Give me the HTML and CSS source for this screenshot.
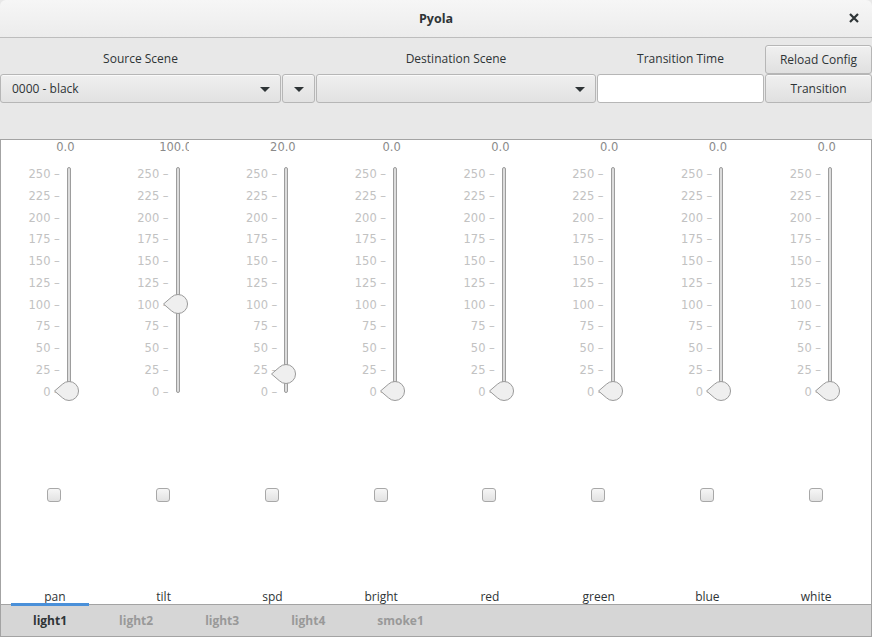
FILE: index.html
```html
<!DOCTYPE html>
<html>
<head>
<meta charset="utf-8">
<link rel="stylesheet" href="styles.css">
</head>
<body>
<div class="win">
  <div class="titlebar">
    <span class="title">Pyola</span>
    <svg class="close" width="10" height="10" viewBox="0 0 10 10"><path d="M1 1 L9 9 M9 1 L1 9"/></svg>
  </div>
  <div class="toolbar">
    <div class="grid">
      <div class="lbl c1">Source Scene</div>
      <div class="lbl c3">Destination Scene</div>
      <div class="lbl c4">Transition Time</div>
      <div class="btn c5">Reload Config</div>
      <div class="combo c1"><span>0000 - black</span><i class="arrow"></i></div>
      <div class="combo mini c2"><i class="arrow"></i></div>
      <div class="combo c3"><span></span><i class="arrow"></i></div>
      <div class="entry c4"></div>
      <div class="btn c5">Transition</div>
    </div>
  </div>
  <div class="content">
    <div class="ch">
      <div class="val">0.0</div>
      <div class="scale"><div class="ticks"><span>250 –</span><span>225 –</span><span>200 –</span><span>175 –</span><span>150 –</span><span>125 –</span><span>100 –</span><span>75 –</span><span>50 –</span><span>25 –</span><span>0 –</span></div><div class="trough"><svg class="knob" style="top:212px" width="28" height="22" viewBox="0 0 28 22"><path d="M1.5 11 L9.3 4.3 A9.5 9.5 0 1 1 9.3 17.7 Z"/></svg></div></div>
      <div class="chk"></div>
      <div class="name">pan</div>
    </div>
    <div class="ch">
      <div class="val">100.0</div>
      <div class="scale"><div class="ticks"><span>250 –</span><span>225 –</span><span>200 –</span><span>175 –</span><span>150 –</span><span>125 –</span><span>100 –</span><span>75 –</span><span>50 –</span><span>25 –</span><span>0 –</span></div><div class="trough"><svg class="knob" style="top:125px" width="28" height="22" viewBox="0 0 28 22"><path d="M1.5 11 L9.3 4.3 A9.5 9.5 0 1 1 9.3 17.7 Z"/></svg></div></div>
      <div class="chk"></div>
      <div class="name">tilt</div>
    </div>
    <div class="ch">
      <div class="val">20.0</div>
      <div class="scale"><div class="ticks"><span>250 –</span><span>225 –</span><span>200 –</span><span>175 –</span><span>150 –</span><span>125 –</span><span>100 –</span><span>75 –</span><span>50 –</span><span>25 –</span><span>0 –</span></div><div class="trough"><svg class="knob" style="top:195px" width="28" height="22" viewBox="0 0 28 22"><path d="M1.5 11 L9.3 4.3 A9.5 9.5 0 1 1 9.3 17.7 Z"/></svg></div></div>
      <div class="chk"></div>
      <div class="name">spd</div>
    </div>
    <div class="ch">
      <div class="val">0.0</div>
      <div class="scale"><div class="ticks"><span>250 –</span><span>225 –</span><span>200 –</span><span>175 –</span><span>150 –</span><span>125 –</span><span>100 –</span><span>75 –</span><span>50 –</span><span>25 –</span><span>0 –</span></div><div class="trough"><svg class="knob" style="top:212px" width="28" height="22" viewBox="0 0 28 22"><path d="M1.5 11 L9.3 4.3 A9.5 9.5 0 1 1 9.3 17.7 Z"/></svg></div></div>
      <div class="chk"></div>
      <div class="name">bright</div>
    </div>
    <div class="ch">
      <div class="val">0.0</div>
      <div class="scale"><div class="ticks"><span>250 –</span><span>225 –</span><span>200 –</span><span>175 –</span><span>150 –</span><span>125 –</span><span>100 –</span><span>75 –</span><span>50 –</span><span>25 –</span><span>0 –</span></div><div class="trough"><svg class="knob" style="top:212px" width="28" height="22" viewBox="0 0 28 22"><path d="M1.5 11 L9.3 4.3 A9.5 9.5 0 1 1 9.3 17.7 Z"/></svg></div></div>
      <div class="chk"></div>
      <div class="name">red</div>
    </div>
    <div class="ch">
      <div class="val">0.0</div>
      <div class="scale"><div class="ticks"><span>250 –</span><span>225 –</span><span>200 –</span><span>175 –</span><span>150 –</span><span>125 –</span><span>100 –</span><span>75 –</span><span>50 –</span><span>25 –</span><span>0 –</span></div><div class="trough"><svg class="knob" style="top:212px" width="28" height="22" viewBox="0 0 28 22"><path d="M1.5 11 L9.3 4.3 A9.5 9.5 0 1 1 9.3 17.7 Z"/></svg></div></div>
      <div class="chk"></div>
      <div class="name">green</div>
    </div>
    <div class="ch">
      <div class="val">0.0</div>
      <div class="scale"><div class="ticks"><span>250 –</span><span>225 –</span><span>200 –</span><span>175 –</span><span>150 –</span><span>125 –</span><span>100 –</span><span>75 –</span><span>50 –</span><span>25 –</span><span>0 –</span></div><div class="trough"><svg class="knob" style="top:212px" width="28" height="22" viewBox="0 0 28 22"><path d="M1.5 11 L9.3 4.3 A9.5 9.5 0 1 1 9.3 17.7 Z"/></svg></div></div>
      <div class="chk"></div>
      <div class="name">blue</div>
    </div>
    <div class="ch">
      <div class="val">0.0</div>
      <div class="scale"><div class="ticks"><span>250 –</span><span>225 –</span><span>200 –</span><span>175 –</span><span>150 –</span><span>125 –</span><span>100 –</span><span>75 –</span><span>50 –</span><span>25 –</span><span>0 –</span></div><div class="trough"><svg class="knob" style="top:212px" width="28" height="22" viewBox="0 0 28 22"><path d="M1.5 11 L9.3 4.3 A9.5 9.5 0 1 1 9.3 17.7 Z"/></svg></div></div>
      <div class="chk"></div>
      <div class="name">white</div>
    </div>
  </div>
  <div class="tabs">
    <div class="tab active">light1</div>
    <div class="tab">light2</div>
    <div class="tab">light3</div>
    <div class="tab">light4</div>
    <div class="tab">smoke1</div>
  </div>
</div>
</body>
</html>
```
FILE: styles.css
```css
* { box-sizing: border-box; }
html, body { margin: 0; padding: 0; }
body {
  width: 872px;
  height: 637px;
  overflow: hidden;
  font-family: "Open Sans", "DejaVu Sans", sans-serif;
  font-size: 12px;
  color: #2e3436;
  background: #e8e8e8;
}
.win {
  display: flex;
  flex-direction: column;
  height: 637px;
}
.titlebar {
  height: 38px;
  flex: none;
  display: flex;
  align-items: center;
  justify-content: center;
  position: relative;
  background: linear-gradient(#f6f6f6, #ececec);
  border-bottom: 1px solid #bdbdbd;
  border-radius: 6px 6px 0 0;
}
.title {
  font-weight: bold;
  font-size: 12.5px;
  color: #2e3436;
}
.close {
  position: absolute;
  left: 849px;
  top: 13px;
}
.close path {
  stroke: #2e3436;
  stroke-width: 2.2;
  fill: none;
}
.toolbar {
  height: 102px;
  flex: none;
  padding-top: 7px;
  background: #e8e8e8;
  border-bottom: 1px solid #a3a3a3;
}
.grid {
  display: grid;
  grid-template-columns: 281px 33px 280px 167px 107px;
  grid-template-rows: 29px 29px;
  column-gap: 1px;
}
.c1 { grid-column: 1; }
.c2 { grid-column: 2; }
.c3 { grid-column: 3; }
.c4 { grid-column: 4; }
.c5 { grid-column: 5; }
.lbl {
  display: flex;
  align-items: center;
  justify-content: center;
  color: #2e3436;
  padding-bottom: 3px;
}
.btn {
  display: flex;
  align-items: center;
  justify-content: center;
  border: 1px solid #b6b6b6;
  border-radius: 3px;
  background: linear-gradient(#f0f0f0, #e0e0e0);
  color: #2e3436;
  box-shadow: inset 0 1px #fafafa;
  padding-bottom: 1px;
}
.combo {
  display: flex;
  align-items: center;
  justify-content: space-between;
  padding: 0 10px 0 11px;
  border: 1px solid #b6b6b6;
  border-radius: 3px;
  background: linear-gradient(#efefef, #e2e2e2);
  box-shadow: inset 0 1px #fafafa;
}
.combo span { padding-bottom: 1px; }
.combo.mini { justify-content: center; padding: 0; }
.arrow {
  width: 0;
  height: 0;
  border-left: 5px solid transparent;
  border-right: 5px solid transparent;
  border-top: 5px solid #2e3436;
  margin-top: 1px;
}
.entry {
  background: #ffffff;
  border: 1px solid #b6b6b6;
  border-radius: 3px;
}
.content {
  flex: 1;
  display: flex;
  background: #ffffff;
  border-left: 1px solid #a3a3a3;
  border-right: 1px solid #a3a3a3;
  border-bottom: 1px solid #a3a3a3;
}
.ch {
  flex: 1;
  display: flex;
  flex-direction: column;
  align-items: center;
}
.val {
  width: 30px;
  margin-left: 20px;
  height: 13px;
  line-height: 13px;
  margin-top: 1px;
  text-align: center;
  overflow: hidden;
  white-space: nowrap;
  font-family: "DejaVu Sans", sans-serif;
  font-size: 11.5px;
  color: #8a8a8a;
}
.scale {
  margin-top: 10px;
  display: flex;
  padding-right: 16px;
  height: 239px;
}
.ticks {
  width: 36px;
  display: flex;
  flex-direction: column;
  align-items: flex-end;
}
.ticks span {
  height: 21.75px;
  line-height: 21.75px;
  font-family: "DejaVu Sans", sans-serif;
  font-size: 11.5px;
  color: #c2c2c2;
  white-space: nowrap;
}
.trough {
  position: relative;
  margin-left: 7px;
  margin-top: 3px;
  width: 4px;
  height: 226px;
  border: 1px solid #9d9d9d;
  border-radius: 2px;
  background: #dcdcdc;
}
.knob {
  position: absolute;
  left: -15px;
  overflow: visible;
}
.knob path {
  fill: #efefef;
  stroke: #9a9a9a;
  stroke-width: 1;
}
.chk {
  margin-top: 85px;
  margin-right: 2px;
  width: 14px;
  height: 14px;
  border: 1px solid #a8a8a8;
  border-radius: 3px;
  background: linear-gradient(#f6f6f6, #e2e2e2);
}
.name {
  margin-top: auto;
  height: 14px;
  line-height: 14px;
  margin-bottom: 0;
  color: #2e3436;
  margin-right: 1px;
}
.tabs {
  height: 32px;
  flex: none;
  display: flex;
  gap: 8px;
  padding-left: 10px;
  background: #d6d6d6;
  border-left: 1px solid #a3a3a3;
  border-right: 1px solid #a3a3a3;
  border-bottom: 1px solid #a3a3a3;
}
.tab {
  padding: 0 22px;
  display: flex;
  align-items: center;
  font-weight: bold;
  color: #999999;
  border-top: 3px solid transparent;
  margin-top: -2px;
  padding-bottom: 1px;
}
.tab.active {
  color: #2e3436;
  border-top-color: #4a90d9;
}
```
